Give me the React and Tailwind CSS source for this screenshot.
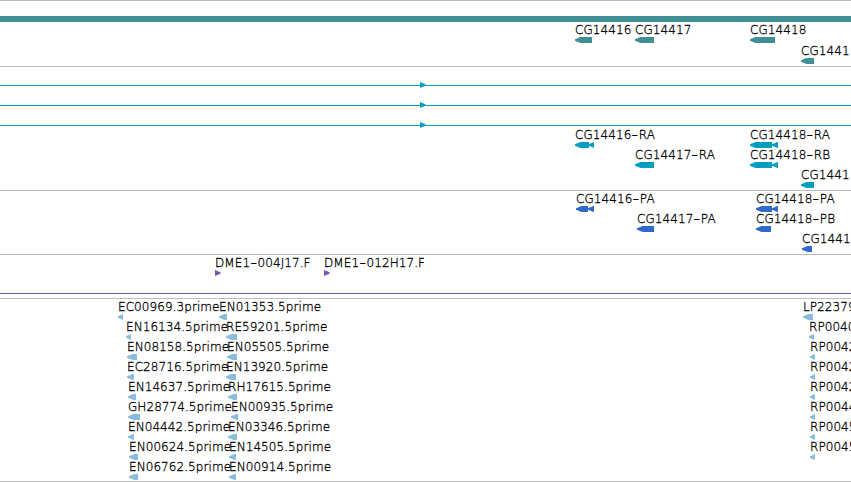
import React from "react";

const GENE = "#3f8f95";
const RNA = "#009fc0";
const PROT = "#3069cc";
const BAC = "#7357a8";
const EST = "#8abcde";

// Body of a left-pointing feature: a short nose followed by a solid bar.
function LeftArrow({ w, color }) {
  const nose = Math.min(5.5, w);
  return (
    <svg className="block" width={w} height="6" fill={color}>
      <polygon points={`0,2.3 ${nose},0 ${w},0 ${w},6 ${nose},6 0,3.7`} />
    </svg>
  );
}

function RightArrow({ color }) {
  return (
    <svg className="block" width="6" height="6" fill={color}>
      <polygon points="0,0 5.5,2.3 5.5,3.7 0,6" />
    </svg>
  );
}

// Hyphens in labels are set wide, like a short dash.
function Label({ text, width }) {
  const parts = text.split("-");
  return (
    <span className="block h-3.5 overflow-hidden leading-3.5" style={{ width }}>
      {parts[0]}
      {parts.length > 1 && (
        <>
          <span className="inline-block w-[7.5px] scale-x-150 text-center">-</span>
          {parts[1]}
        </>
      )}
    </span>
  );
}

function Feature({ f, color }) {
  const [x, text, w, tail, right, width] = f;
  return (
    <div className="absolute top-0 tracking-[0.07px] whitespace-nowrap" style={{ left: x }}>
      <Label text={text} width={width} />
      <div className="flex">
        {right ? <RightArrow color={color} /> : <LeftArrow w={w} color={color} />}
        {tail ? <LeftArrow w={tail} color={color} /> : null}
      </div>
    </div>
  );
}

function Row({ items, color }) {
  return (
    <div className="relative h-5 overflow-hidden">
      {items.map((f) => (
        <Feature key={f[1]} f={f} color={color} />
      ))}
    </div>
  );
}

function SpanRow({ lineClass, color, marker }) {
  return (
    <div className="flex h-5 flex-col pt-3.5">
      <div className="relative h-1.5 pt-[3px]">
        <div className={`h-px ${lineClass}`} />
        {marker && (
          <div className="absolute top-0 left-[420px]">
            <RightArrow color={color} />
          </div>
        )}
      </div>
    </div>
  );
}

const transcripts = [
  [[575, "CG14416-RA", 14, 5], [750, "CG14418-RA", 22, 6]],
  [[635, "CG14417-RA", 19], [750, "CG14418-RB", 22, 6]],
  [[801, "CG1441", 13]],
];

const proteins = [
  [[576, "CG14416-PA", 12, 6], [756, "CG14418-PA", 16, 6]],
  [[637, "CG14417-PA", 17], [756, "CG14418-PB", 15]],
  [[802, "CG1441", 10]],
];

const ests = [
  [[118, "EC00969.3prime", 5], [219, "EN01353.5prime", 8], [803, "LP22379", 10]],
  [[126, "EN16134.5prime", 5], [226, "RE59201.5prime", 11], [809, "RP0040", 5]],
  [[127, "EN08158.5prime", 10], [227, "EN05505.5prime", 10], [810, "RP0042", 5]],
  [[127, "EC28716.5prime", 7], [226, "EN13920.5prime", 10], [810, "RP0042", 5]],
  [[128, "EN14637.5prime", 8], [228, "RH17615.5prime", 9], [810, "RP0042", 5]],
  [[128, "GH28774.5prime", 12], [231, "EN00935.5prime", 7], [810, "RP0044", 5]],
  [[128, "EN04442.5prime", 6], [228, "EN03346.5prime", 9], [810, "RP0045", 5]],
  [[129, "EN00624.5prime", 9], [229, "EN14505.5prime", 7], [810, "RP0045", 5]],
  [[129, "EN06762.5prime", 9], [229, "EN00914.5prime", 7]],
];

export default function App() {
  return (
    <main className="h-[482px] w-[851px] overflow-hidden bg-white font-['DejaVu_Sans',sans-serif] text-xs font-extralight text-black [-webkit-text-stroke:0.3px_black]">
      <section className="border-t border-[#bebebe] pt-[15px] pb-0.5">
        <div className="mb-px h-1.5 bg-[#3f8f95]" />
        <div className="flex flex-col gap-px">
          <Row color={GENE} items={[[575, "CG14416", 17], [635, "CG14417", 19], [750, "CG14418", 25]]} />
          <Row color={GENE} items={[[801, "CG1441", 13]]} />
        </div>
      </section>
      <section className="border-t border-[#bebebe] pt-px pb-0.5">
        <SpanRow lineClass="bg-[#009fc0]" color={RNA} marker />
        <SpanRow lineClass="bg-[#009fc0]" color={RNA} marker />
        <SpanRow lineClass="bg-[#009fc0]" color={RNA} marker />
        {transcripts.map((r, i) => (
          <Row key={i} items={r} color={RNA} />
        ))}
      </section>
      <section className="border-t border-[#bebebe] pt-px pb-0.5">
        {proteins.map((r, i) => (
          <Row key={i} items={r} color={PROT} />
        ))}
      </section>
      <section className="border-t border-[#bebebe] pt-px pb-0.5">
        <Row
          color={BAC}
          items={[
            [215, "DME1-004J17.F", 5, 0, true, 94.5],
            [324, "DME1-012H17.F", 5, 0, true, 100],
          ]}
        />
        <SpanRow lineClass="bg-[#7357a8]" color={BAC} />
      </section>
      <section className="border-y border-[#bebebe] pt-px pb-px">
        {ests.map((r, i) => (
          <Row key={i} items={r} color={EST} />
        ))}
      </section>
    </main>
  );
}
